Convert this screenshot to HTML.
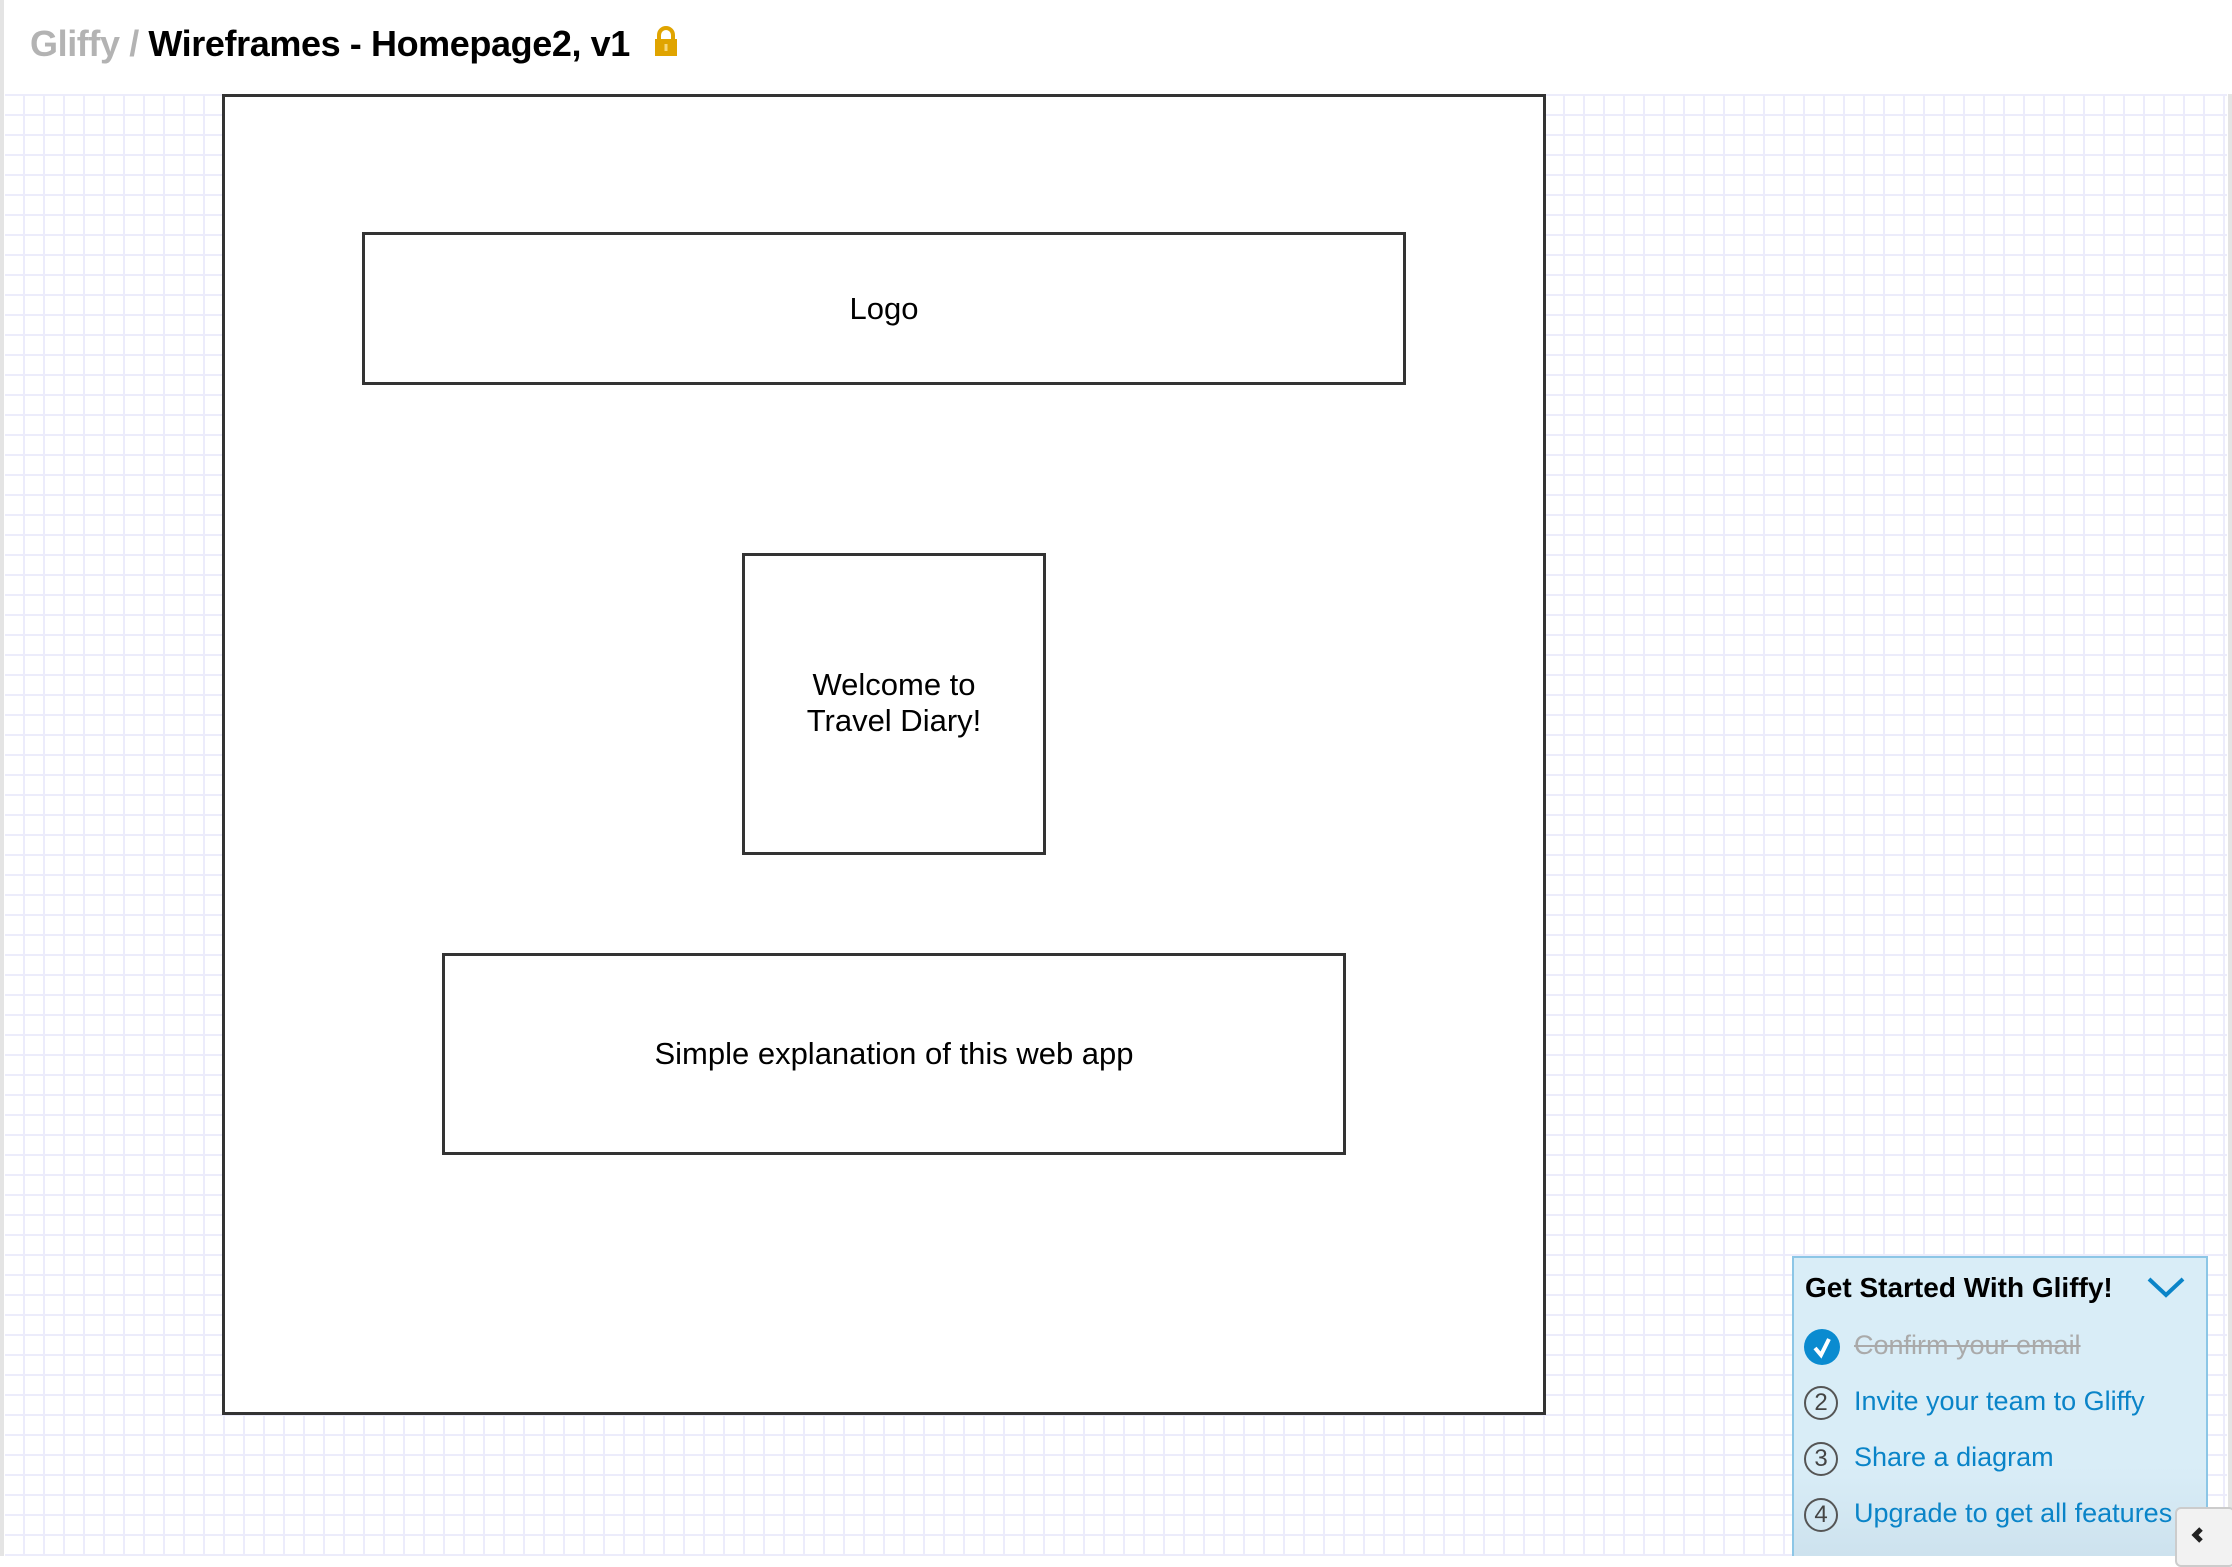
<!DOCTYPE html>
<html><head><meta charset="utf-8"><style>
html,body{margin:0;padding:0;width:2232px;height:1556px;overflow:hidden;background:#fff;font-family:"Liberation Sans",sans-serif;}
.hdr{position:absolute;left:0;top:0;width:2232px;height:94px;background:#fff;}
.title{position:absolute;left:30px;top:23px;font-size:36px;font-weight:bold;letter-spacing:-0.4px;color:#000;white-space:nowrap;}
.title .g{color:#b3b3b3}
.canvas{position:absolute;left:5px;top:94px;width:2222px;height:1462px;
background-color:#fff;
background-image:linear-gradient(to right,#ececfb 2px,transparent 2px),linear-gradient(to bottom,#ececfb 2px,transparent 2px);
background-size:20px 20px;background-position:-2px 0;}
.lb{position:absolute;left:0;top:0;width:4px;height:1556px;background:#e4e4e4}
.rb{position:absolute;right:0;top:0;width:4px;height:1556px;background:#e4e4e4}
.box{position:absolute;border:3px solid #333;background:#fff;box-sizing:border-box;display:flex;align-items:center;justify-content:center;text-align:center;font-size:31px;color:#000;line-height:36px;}
.panel{position:absolute;left:1792px;top:1256px;width:416px;height:300px;border:2px solid #8cc6e6;border-bottom:none;box-sizing:border-box;background:linear-gradient(#d9edf7 70%,#cde2ee);}
.pt{position:absolute;left:11px;top:14px;font-size:28px;font-weight:bold;color:#000;}
.item{position:absolute;left:40px;font-size:27px;color:#0a84c8;white-space:nowrap}
.circ{position:absolute;left:10px;width:30px;height:30px;border:2px solid #555;border-radius:50%;font-size:24px;color:#444;text-align:center;line-height:30px;}
.tab{position:absolute;left:2175px;top:1507px;width:60px;height:60px;background:#f2f2f2;border:2px solid #ccc;border-radius:6px;box-sizing:border-box;}
</style></head><body>
<div class="canvas"></div>
<div class="lb"></div><div class="rb"></div>
<div class="hdr"><div class="lb" style="height:94px"></div>
<div class="title"><span class="g">Gliffy / </span>Wireframes - Homepage2, v1
<svg width="28" height="32" viewBox="0 0 28 32" style="vertical-align:-2px;margin-left:12px"><path d="M7 14V9a7 7 0 0 1 14 0v5" fill="none" stroke="#e0a400" stroke-width="4"/><rect x="3" y="13" width="22" height="17" fill="#e0a400"/><rect x="12.5" y="18" width="3" height="7" fill="#f6d77a"/></svg></div></div>
<div class="box" style="left:222px;top:94px;width:1324px;height:1321px;"></div>
<div class="box" style="left:362px;top:232px;width:1044px;height:153px;">Logo</div>
<div class="box" style="left:742px;top:553px;width:304px;height:302px;padding-bottom:2px">Welcome to<br>Travel Diary!</div>
<div class="box" style="left:442px;top:953px;width:904px;height:202px;">Simple explanation of this web app</div>
<div class="panel">
<div class="pt">Get Started With Gliffy!</div>
<svg style="position:absolute;left:352px;top:17px" width="40" height="24" viewBox="0 0 40 24"><path d="M3 4l17 16L37 4" fill="none" stroke="#0a84c8" stroke-width="4"/></svg>
<div style="position:absolute;left:10px;top:71px;width:36px;height:36px;border-radius:50%;background:#0a8bd0"><svg width="36" height="36" viewBox="0 0 36 36"><path d="M11 19l6 7 8-16" fill="none" stroke="#fff" stroke-width="4"/></svg></div>
<div class="item" style="left:60px;top:72px;color:#aaa;text-decoration:line-through">Confirm your email</div>
<div class="circ" style="top:128px">2</div><div class="item" style="left:60px;top:128px">Invite your team to Gliffy</div>
<div class="circ" style="top:184px">3</div><div class="item" style="left:60px;top:184px">Share a diagram</div>
<div class="circ" style="top:240px">4</div><div class="item" style="left:60px;top:240px">Upgrade to get all features</div>
</div>
<div class="tab"><svg width="56" height="50" viewBox="0 0 56 50"><path d="M24 20l-6 6 6 6" fill="none" stroke="#222" stroke-width="5"/></svg></div>
</body></html>
